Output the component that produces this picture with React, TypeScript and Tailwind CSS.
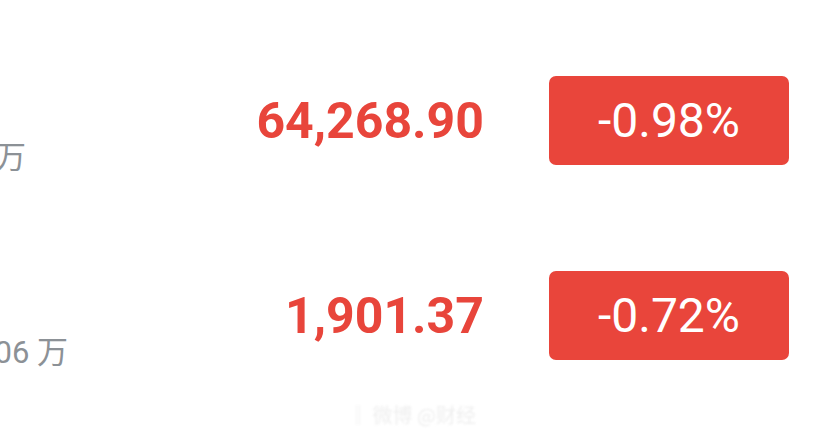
import React from "react";

type Quote = {
  sub: string;
  price: string;
  change: string;
  subWidth: string;
};

const quotes: Quote[] = [
  { sub: "成交额 4826.13 亿万", price: "64,268.90", change: "-0.98%", subWidth: "w-[26px]" },
  { sub: "成交额 3517.06 万", price: "1,901.37", change: "-0.72%", subWidth: "w-[68px]" },
];

function QuoteRow({ q }: { q: Quote }) {
  return (
    <div className="flex h-[195px] items-center">
      {/* left column: name/subtitle, clipped by the screen edge */}
      <div className={`mt-[73px] flex justify-end overflow-hidden whitespace-nowrap ${q.subWidth}`}>
        <span className="text-[31px] leading-none text-[#8c9196] [font-family:Roboto,'Noto_Sans_CJK_SC',sans-serif]">
          {q.sub}
        </span>
      </div>
      <div className="flex-1" />
      <div className="text-[50px] font-bold leading-none text-[#e8453b] [font-family:Roboto,sans-serif]">
        {q.price}
      </div>
      <div className="ml-[65px] mr-[35px] flex h-[89px] w-[240px] items-center justify-center rounded-[7px] bg-[#e9453b] text-[48px] leading-none text-white [font-family:Roboto,sans-serif]">
        {q.change}
      </div>
    </div>
  );
}

export default function App() {
  return (
    <div className="relative h-[434px] w-[824px] overflow-hidden bg-white">
      <div className="pt-[23px]">
        {quotes.map((q, i) => (
          <QuoteRow key={i} q={q} />
        ))}
      </div>
      {/* faint watermark */}
      <div className="absolute left-[348px] top-[400px] text-[20px] text-[#efefef] blur-[1px] [font-family:'Noto_Sans_CJK_SC',sans-serif]">
        ‖ 微博 @财经
      </div>
    </div>
  );
}
